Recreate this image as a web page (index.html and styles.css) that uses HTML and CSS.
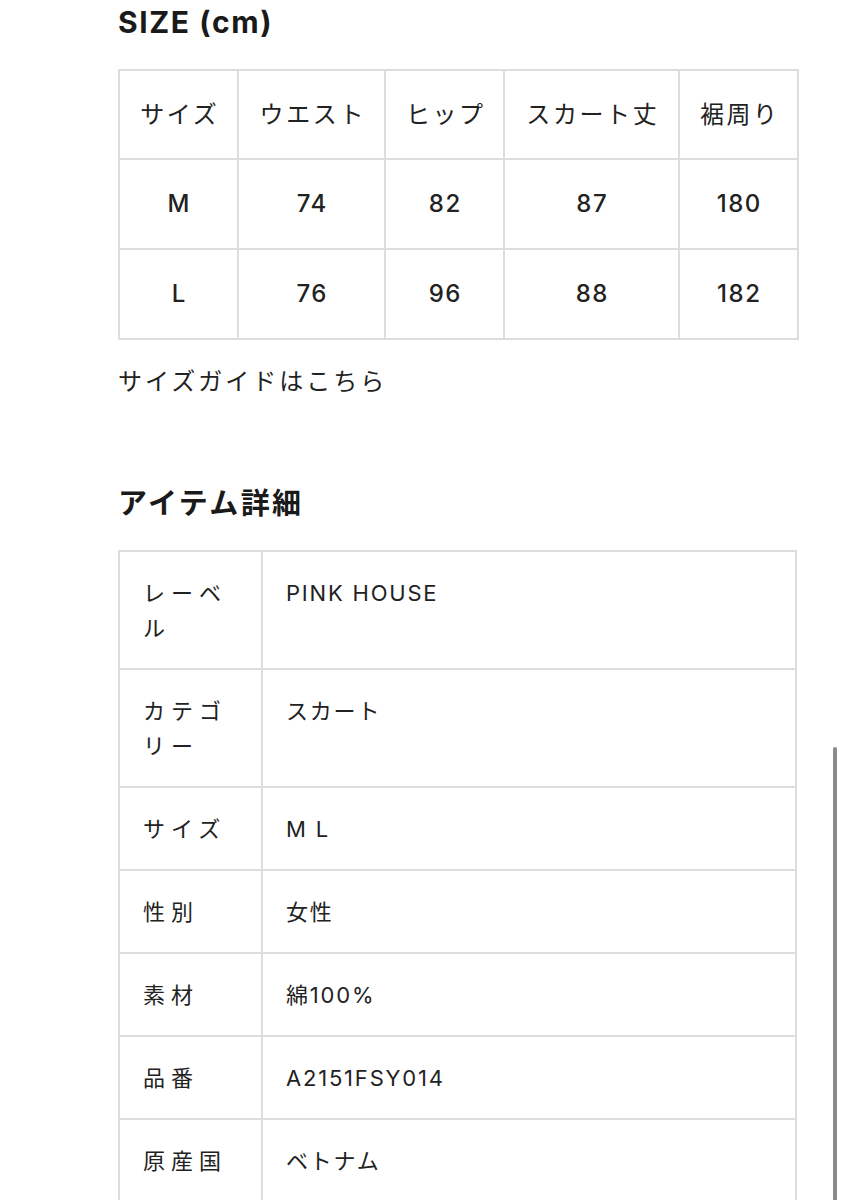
FILE: index.html
```html
<!DOCTYPE html>
<html lang="ja">
<head>
<meta charset="utf-8">
<title>SIZE / アイテム詳細</title>
<link rel="stylesheet" href="styles.css">
</head>
<body>
<main class="page">
  <h2 class="heading heading-size">SIZE (cm)</h2>
  <table class="size-table">
    <colgroup>
      <col class="c1"><col class="c2"><col class="c3"><col class="c4"><col class="c5">
    </colgroup>
    <tr class="size-head">
      <td>サイズ</td><td>ウエスト</td><td>ヒップ</td><td>スカート丈</td><td>裾周り</td>
    </tr>
    <tr>
      <td>M</td><td>74</td><td>82</td><td>87</td><td>180</td>
    </tr>
    <tr>
      <td>L</td><td>76</td><td>96</td><td>88</td><td>182</td>
    </tr>
  </table>
  <p class="guide">サイズガイドはこちら</p>

  <h2 class="heading heading-detail">アイテム詳細</h2>
  <table class="detail-table">
    <colgroup><col class="d1"><col class="d2"></colgroup>
    <tr><th>レーベル</th><td>PINK HOUSE</td></tr>
    <tr><th>カテゴリー</th><td>スカート</td></tr>
    <tr><th>サイズ</th><td>M L</td></tr>
    <tr><th>性別</th><td>女性</td></tr>
    <tr><th>素材</th><td>綿100%</td></tr>
    <tr><th>品番</th><td>A2151FSY014</td></tr>
    <tr><th>原産国</th><td>ベトナム</td></tr>
  </table>
</main>
<div class="scroll-indicator"></div>
</body>
</html>
```

FILE: styles.css
```css
html, body {
  margin: 0;
  padding: 0;
  background: #ffffff;
}

body {
  font-family: "Inter", "Noto Sans CJK JP", sans-serif;
  color: #222222;
  overflow: hidden;
}

.page {
  padding: 0 45px 0 118px;
}

.heading {
  margin: 0;
  font-size: 30px;
  line-height: 36px;
  font-weight: 700;
  color: #1a1a1a;
}

.heading-size {
  padding-top: 4px;
  letter-spacing: 1.6px;
}

.size-table {
  margin-top: 29px;
  width: 679px;
  border-collapse: collapse;
  table-layout: fixed;
}

.size-table .c1 { width: 119px; }
.size-table .c2 { width: 147px; }
.size-table .c3 { width: 119px; }
.size-table .c4 { width: 175px; }
.size-table .c5 { width: 119px; }

.size-table td {
  border: 2px solid #dddddd;
  height: 88px;
  padding: 0;
  text-align: center;
  vertical-align: middle;
  font-size: 24px;
  line-height: 36px;
  font-weight: 500;
  letter-spacing: 1.5px;
  text-indent: 1.5px;
  color: #222222;
}

.size-head td {
  height: 87px;
  font-weight: 400;
  letter-spacing: 2.6px;
  text-indent: 2.6px;
}

.guide {
  margin: 24px 0 0;
  font-size: 24px;
  line-height: 36px;
  letter-spacing: 3px;
  color: #222222;
}

.heading-detail {
  margin-top: 86px;
  font-size: 29px;
  letter-spacing: 2.4px;
}

.detail-table {
  margin-top: 28px;
  width: 679px;
  border-collapse: collapse;
  table-layout: fixed;
}

.detail-table .d1 { width: 143px; }

.detail-table th,
.detail-table td {
  border: 2px solid #dddddd;
  padding: 24px 22px 22px 23px;
  text-align: left;
  vertical-align: top;
  font-size: 22px;
  line-height: 35px;
  font-weight: 400;
  color: #222222;
}

.detail-table th {
  letter-spacing: 6px;
}

.detail-table td {
  letter-spacing: 1.8px;
}

.scroll-indicator {
  position: fixed;
  right: 5px;
  top: 747px;
  width: 4px;
  height: 470px;
  border-radius: 2px;
  background: #8a8a8a;
}
```
